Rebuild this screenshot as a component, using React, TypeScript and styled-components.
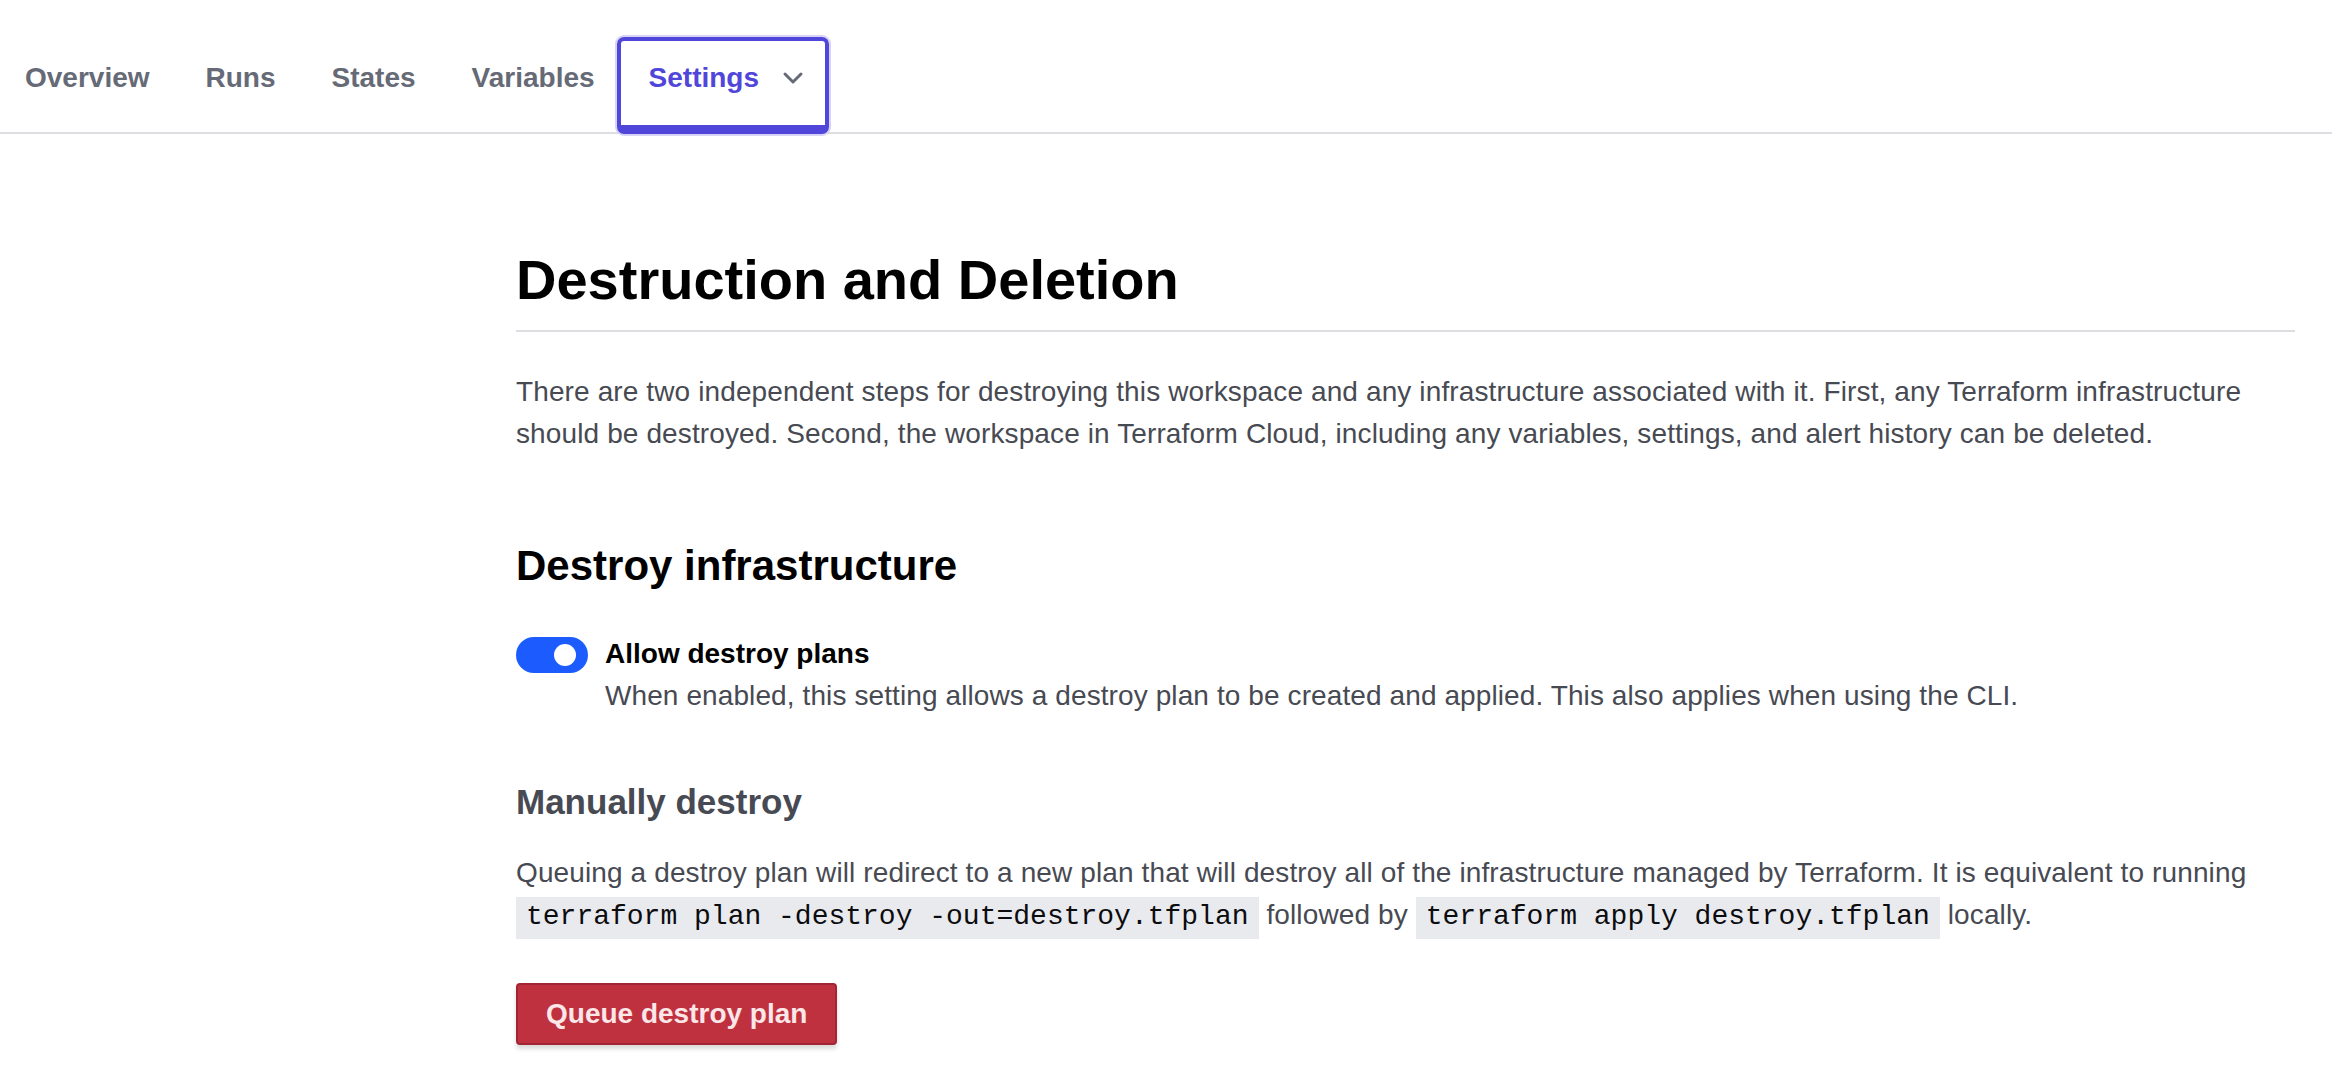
import React, { useState } from "react";
import styled, { createGlobalStyle } from "styled-components";

const GlobalStyle = createGlobalStyle`
  html, body {
    margin: 0;
    padding: 0;
    background: #ffffff;
    font-family: "Liberation Sans", Arial, Helvetica, sans-serif;
  }
`;

const tabs = ["Overview", "Runs", "States", "Variables"];

// Chevron drawn beside the active tab label
const Chevron = () => (
  <svg width="22" height="14" viewBox="0 0 22 14" fill="none">
    <polyline points="3,3 11,11 19,3" stroke="#656a76" strokeWidth="3" strokeLinecap="round" strokeLinejoin="round" />
  </svg>
);

const App = () => {
  const [allowDestroy, setAllowDestroy] = useState(true); // toggle state

  return (
    <Page>
      <GlobalStyle />
      <TabBar>
        <TabList>
          {tabs.map((t) => (
            <Tab key={t}>{t}</Tab>
          ))}
          <Tab $active>
            Settings
            <ChevronWrap>
              <Chevron />
            </ChevronWrap>
          </Tab>
        </TabList>
      </TabBar>

      <Layout>
        <Aside />
        <Content>
          <PageTitle>Destruction and Deletion</PageTitle>
          <Lead>
            There are two independent steps for destroying this workspace and any infrastructure associated with it.
            First, any Terraform infrastructure should be destroyed. Second, the workspace in Terraform Cloud, including
            any variables, settings, and alert history can be deleted.
          </Lead>

          <SectionTitle>Destroy infrastructure</SectionTitle>

          <ToggleRow>
            <Switch $on={allowDestroy} onClick={() => setAllowDestroy(!allowDestroy)}>
              <Knob $on={allowDestroy} />
            </Switch>
            <ToggleText>
              <ToggleLabel>Allow destroy plans</ToggleLabel>
              <ToggleHelp>
                When enabled, this setting allows a destroy plan to be created and applied. This also applies when using
                the CLI.
              </ToggleHelp>
            </ToggleText>
          </ToggleRow>

          <SubTitle>Manually destroy</SubTitle>
          <Body>
            Queuing a destroy plan will redirect to a new plan that will destroy all of the infrastructure managed by
            Terraform. It is equivalent to running <Code>terraform plan -destroy -out=destroy.tfplan</Code> followed by{" "}
            <Code>terraform apply destroy.tfplan</Code> locally.
          </Body>

          <DangerButton>Queue destroy plan</DangerButton>
        </Content>
      </Layout>
    </Page>
  );
};

export default App;

// Styled Components

const Page = styled.div`
  width: 100%;
  min-height: 1080px;
  background: #fff;
`;

const TabBar = styled.nav`
  height: 134px;
  border-bottom: 2px solid #dcdee2;
  box-sizing: border-box;
  display: flex;
  align-items: flex-end;
`;

const TabList = styled.div`
  display: flex;
  align-items: flex-end;
  margin-left: -3px;
  margin-bottom: -2px;
`;

const Tab = styled.div<{ $active?: boolean }>`
  box-sizing: border-box;
  height: 97px;
  display: flex;
  align-items: center;
  gap: ${({ $active }) => ($active ? "23px" : "26px")};
  padding: ${({ $active }) => ($active ? "0 21px 10px 28px" : "0 24px 10px")};
  margin-left: ${({ $active }) => ($active ? "-6px" : "0")};
  border: 4px solid ${({ $active }) => ($active ? "#5046d9" : "transparent")};
  border-bottom-width: 9px;
  border-radius: 7px;
  box-shadow: ${({ $active }) => ($active ? "0 0 0 2px #d6d3f6" : "none")};
  font-size: 28px;
  font-weight: 700;
  color: ${({ $active }) => ($active ? "#5046d9" : "#656a76")};
  white-space: nowrap;
  cursor: pointer;
`;

const ChevronWrap = styled.span`
  display: flex;
  align-items: center;
  margin-top: -1px;
`;

const Layout = styled.div`
  display: grid;
  grid-template-columns: 516px 1fr;
  padding-right: 37px;
`;

const Aside = styled.aside``;

const Content = styled.main`
  display: flex;
  flex-direction: column;
  align-items: flex-start;
  padding-top: 112px;
`;

const PageTitle = styled.h1`
  align-self: stretch;
  margin: 0;
  padding-bottom: 17px;
  border-bottom: 2px solid #dcdee2;
  font-size: 56px;
  line-height: 67px;
  font-weight: 700;
  color: #000;
`;

const Lead = styled.p`
  margin: 39px 0 0;
  font-size: 28px;
  line-height: 42px;
  letter-spacing: 0.12px;
  color: #474a52;
`;

const SectionTitle = styled.h2`
  margin: 86px 0 0;
  font-size: 42px;
  line-height: 50px;
  font-weight: 700;
  color: #000;
`;

const ToggleRow = styled.div`
  display: flex;
  align-items: flex-start;
  gap: 17px;
  margin-top: 42px;
`;

const Switch = styled.button<{ $on: boolean }>`
  flex: none;
  position: relative;
  width: 72px;
  height: 36px;
  margin-top: 4px;
  padding: 0;
  border: none;
  border-radius: 18px;
  background: ${({ $on }) => ($on ? "#1c5cfe" : "#babdc4")};
  cursor: pointer;
`;

const Knob = styled.span<{ $on: boolean }>`
  position: absolute;
  top: 7px;
  left: ${({ $on }) => ($on ? "38px" : "7px")};
  width: 22px;
  height: 22px;
  border-radius: 50%;
  background: #fff;
`;

const ToggleText = styled.div`
  display: flex;
  flex-direction: column;
`;

const ToggleLabel = styled.div`
  font-size: 28px;
  line-height: 42px;
  font-weight: 700;
  color: #000;
`;

const ToggleHelp = styled.div`
  font-size: 28px;
  line-height: 42px;
  letter-spacing: 0.1px;
  color: #474a52;
`;

const SubTitle = styled.h3`
  margin: 64px 0 0;
  font-size: 35px;
  line-height: 42px;
  font-weight: 700;
  color: #474a52;
`;

const Body = styled.p`
  margin: 29px 0 0;
  font-size: 28px;
  line-height: 42px;
  letter-spacing: 0.12px;
  color: #474a52;
`;

const Code = styled.code`
  font-family: "Liberation Mono", "DejaVu Sans Mono", monospace;
  font-size: 28px;
  letter-spacing: 0;
  color: #0c0c0e;
  background: #e8eaee;
  padding: 4px 10px 7px;
`;

const DangerButton = styled.button`
  margin-top: 45px;
  height: 62px;
  padding: 0 28px;
  border: 2px solid #a12534;
  border-radius: 4px;
  background: #c0313f;
  color: #fbe6e8;
  font-family: "Liberation Sans", Arial, sans-serif;
  font-size: 28px;
  font-weight: 700;
  box-shadow: 0 4px 4px rgba(0, 0, 0, 0.14);
  cursor: pointer;
`;
